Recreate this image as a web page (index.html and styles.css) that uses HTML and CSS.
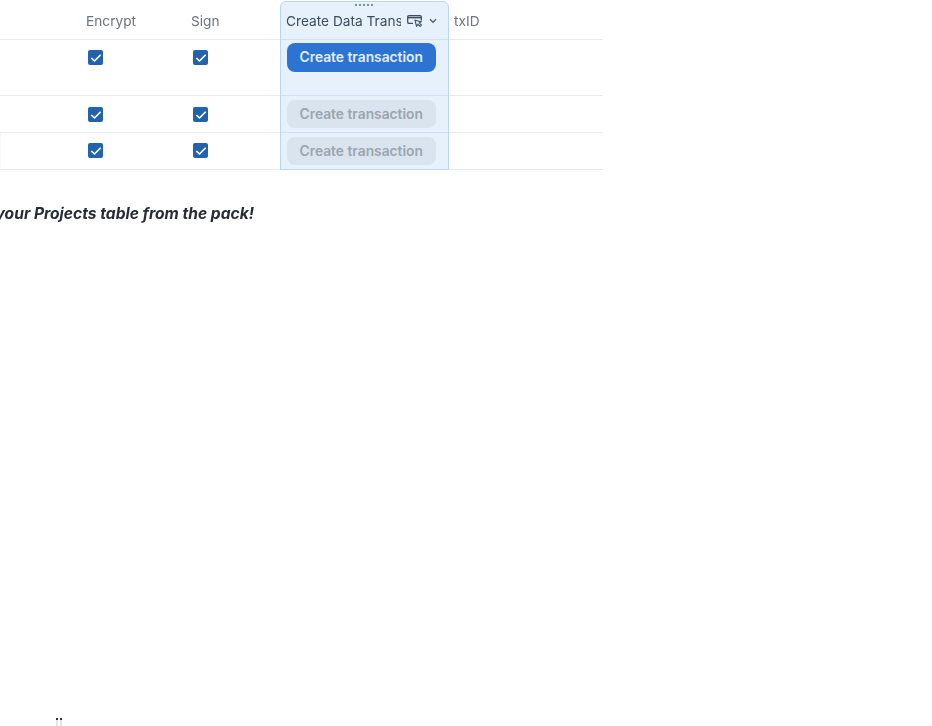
FILE: index.html
```html
<!DOCTYPE html>
<html lang="en">
<head>
<meta charset="utf-8">
<title>Projects table</title>
<link rel="stylesheet" href="styles.css">
</head>
<body>
<main class="page">
  <div class="table">
    <div class="row head">
      <div class="cell"></div>
      <div class="cell">Encrypt</div>
      <div class="cell">Sign</div>
      <div class="cell active-head">
        <span class="head-label">Create Data Transaction</span>
        <svg class="head-icon" width="16" height="12" viewBox="0 0 16 12" fill="none" stroke="#3d4650" stroke-width="1.300"><path d="M6 8.400H1.900C1.200 8.400 .7 7.900 .7 7.200V1.900C.7 1.200 1.200 .7 1.900 .7H13.100C13.800 .7 14.300 1.200 14.300 1.900V5.500"/><path d="M1 2.600H14" stroke-width="1.600"/><path d="M8 5.300L9.500 11.200L10.800 9.400L13 11.400L14.400 10L12.300 8L14.100 6.800Z" fill="#fff" stroke-width="1.100"/></svg>
        <svg class="chevron" width="8" height="6" viewBox="0 0 8 6" fill="none" stroke="#4d5661" stroke-width="1.300"><path d="M1 1.300L4 4.300L7 1.300"/></svg>
      </div>
      <div class="cell tx">txID</div>
    </div>
    <div class="row tall">
      <div class="cell"></div>
      <div class="cell"><span class="check"><svg width="12" height="10" viewBox="0 0 12 10" fill="none" stroke="#fff" stroke-width="1.600"><path d="M1.300 5L4.500 8L10.700 1.800"/></svg></span></div>
      <div class="cell"><span class="check"><svg width="12" height="10" viewBox="0 0 12 10" fill="none" stroke="#fff" stroke-width="1.600"><path d="M1.300 5L4.500 8L10.700 1.800"/></svg></span></div>
      <div class="cell action"><button class="btn primary">Create transaction</button></div>
      <div class="cell"></div>
    </div>
    <div class="row mid">
      <div class="cell"></div>
      <div class="cell"><span class="check"><svg width="12" height="10" viewBox="0 0 12 10" fill="none" stroke="#fff" stroke-width="1.600"><path d="M1.300 5L4.500 8L10.700 1.800"/></svg></span></div>
      <div class="cell"><span class="check"><svg width="12" height="10" viewBox="0 0 12 10" fill="none" stroke="#fff" stroke-width="1.600"><path d="M1.300 5L4.500 8L10.700 1.800"/></svg></span></div>
      <div class="cell action"><button class="btn muted">Create transaction</button></div>
      <div class="cell"></div>
    </div>
    <div class="row last">
      <div class="cell"></div>
      <div class="cell"><span class="check"><svg width="12" height="10" viewBox="0 0 12 10" fill="none" stroke="#fff" stroke-width="1.600"><path d="M1.300 5L4.500 8L10.700 1.800"/></svg></span></div>
      <div class="cell"><span class="check"><svg width="12" height="10" viewBox="0 0 12 10" fill="none" stroke="#fff" stroke-width="1.600"><path d="M1.300 5L4.500 8L10.700 1.800"/></svg></span></div>
      <div class="cell action"><button class="btn muted">Create transaction</button></div>
      <div class="cell"></div>
    </div>
    <div class="col-highlight"><span class="grip"><i></i><i></i><i></i><i></i><i></i></span></div>
  </div>
  <p class="note">your Projects table from the pack!</p>
</main>
<div class="cutoff"><i></i><i></i></div>
</body>
</html>
```
FILE: styles.css
```css
* { box-sizing: border-box; }
html, body { margin: 0; height: 100%; background: #fff; overflow: hidden; }
body { font-family: Inter, "Liberation Sans", sans-serif; color: #262c33; }
.table { position: relative; width: 603px; filter: blur(0.4px); }
.row {
  display: grid;
  grid-template-columns: 81px 105px 95px 168px 154px;
  height: 37px;
  border-bottom: 1px solid #e9ebee;
}
.row.tall { height: 56px; }
.row.head { height: 40px; color: #6b7480; font-size: 13.7px; }
.row.last { box-shadow: inset 1px 0 0 #f8f8f9; }
.row.head .cell { display: flex; align-items: center; padding-left: 5px; padding-top: 2px; }
.cell { padding: 4px 0 0 7px; min-width: 0; }
.row.head .active-head { color: #3a424b; padding-left: 5px; padding-right: 11px; }
.head-label { width: 115px; overflow: hidden; white-space: nowrap; flex: none; }
.head-icon { margin-left: 6px; flex: none; }
.chevron { margin-left: 6px; flex: none; }
.row.head .tx { padding-left: 5px; }
.check {
  display: flex; align-items: center; justify-content: center;
  width: 15px; height: 15px; margin-top: 6px; border-radius: 2px; background: #2263ac;
}
.row.mid .check { margin-top: 7px; }
.cell.action { padding: 4px 0 0 6px; }
.row.tall .cell.action { padding-top: 3px; }
.btn {
  display: block; width: 148.5px; height: 28px; padding: 0; border: 0; border-radius: 8px;
  font: 600 13.8px/28px Inter, "Liberation Sans", sans-serif; text-align: center;
}
.btn.primary { height: 29px; line-height: 29px; background: #2a70d0; color: #fafcff; }
.btn.muted { background: #f0f0f1; color: #a8a8a8; }
.col-highlight {
  position: absolute; left: 280px; top: 1px; width: 169px; height: 169px;
  border: 1px solid #b9d6f2; border-radius: 6px 6px 0 0; background: rgba(66, 145, 225, 0.13);
}
.grip { position: absolute; left: 74px; top: 2px; display: flex; gap: 2px; }
.grip i { width: 2px; height: 2px; background: #6f8fb3; }
.note {
  margin: 35px 0 0 -4.5px; font-size: 15.6px; line-height: 18px; font-weight: 700; font-style: italic; color: #262c33;
  filter: blur(0.3px);
}
.cutoff { position: absolute; left: 56px; top: 718px; display: flex; gap: 2px; }
.cutoff i { width: 2px; height: 8px; background: #e4e4e4; border-top: 2px solid #333; }
```
